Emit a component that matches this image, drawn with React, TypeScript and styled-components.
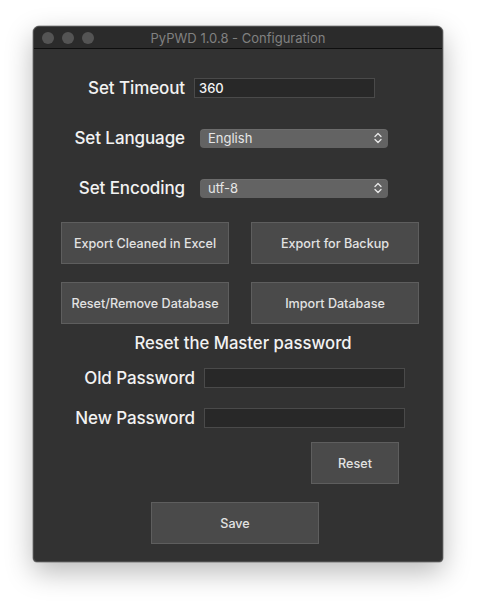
import React from "react";
import styled, { createGlobalStyle } from "styled-components";

const Global = createGlobalStyle`
  html, body { margin: 0; padding: 0; background: #ffffff; }
  body { font-family: Inter, "Noto Sans", "DejaVu Sans", sans-serif; }
`;

const Page = styled.div`
  width: 477px;
  height: 603px;
  padding: 26px 0 0 33px;
  box-sizing: border-box;
  background: #ffffff;
`;

const Window = styled.div`
  width: 410px;
  height: 536px;
  box-sizing: border-box;
  background: #323232;
  border: 1px solid #4c4c4c;
  border-radius: 6px 6px 4px 4px;
  box-shadow: 0 10px 28px rgba(0, 0, 0, 0.28), 0 0 0 0.5px rgba(0, 0, 0, 0.4);
  display: flex;
  flex-direction: column;
  overflow: hidden;
`;

const TitleBar = styled.div`
  height: 21px;
  flex: none;
  background: #2b2b2b;
  border-bottom: 1px solid #0e0e0e;
  display: flex;
  align-items: center;
  position: relative;
  padding-left: 8px;
  gap: 8px;
`;

const Light = styled.span`
  width: 12px;
  height: 12px;
  border-radius: 50%;
  background: #545454;
`;

const Title = styled.div`
  position: absolute;
  left: 0;
  right: 0;
  top: 0;
  bottom: 0;
  display: flex;
  align-items: center;
  justify-content: center;
  font-size: 13px;
  color: #818181;
  pointer-events: none;
`;

const Content = styled.div`
  display: flex;
  flex-direction: column;
  color: #f2f2f2;
`;

const FormRow = styled.div<{ $top: number; $labelW: number; $gap: number; $fieldW: number }>`
  display: grid;
  grid-template-columns: ${(p) => p.$labelW}px ${(p) => p.$fieldW}px;
  column-gap: ${(p) => p.$gap}px;
  align-items: center;
  height: 20px;
  margin-top: ${(p) => p.$top}px;
`;

const Label = styled.div`
  text-align: right;
  font-size: 17px;
  font-weight: 500;
  color: #f2f2f2;
  white-space: nowrap;
  letter-spacing: -0.1px;
`;

const TextField = styled.div`
  height: 20px;
  box-sizing: border-box;
  background: #282828;
  border: 1px solid #4a4a4a;
  font-size: 13px;
  font-weight: 500;
  color: #f4f4f4;
  padding-left: 4px;
  display: flex;
  align-items: center;
`;

const Select = styled.div`
  height: 19px;
  box-sizing: border-box;
  background: #636363;
  border-radius: 4px;
  font-size: 13px;
  color: #e6e6e6;
  padding: 0 6px 0 8px;
  display: flex;
  align-items: center;
  justify-content: space-between;
  box-shadow: inset 0 1px 0 rgba(255, 255, 255, 0.06);
`;

const ButtonGrid = styled.div`
  display: grid;
  grid-template-columns: 168px 168px;
  grid-auto-rows: 42px;
  column-gap: 22px;
  row-gap: 18px;
  margin: 24px 0 0 27px;
`;

const Button = styled.div<{ $w?: number; $left?: number; $top?: number }>`
  box-sizing: border-box;
  height: 42px;
  ${(p) => (p.$w ? `width: ${p.$w}px;` : "")}
  ${(p) => (p.$left !== undefined ? `margin-left: ${p.$left}px;` : "")}
  ${(p) => (p.$top !== undefined ? `margin-top: ${p.$top}px;` : "")}
  background: #4a4a4a;
  border: 1px solid #5e5e5e;
  color: #e2e2e2;
  font-size: 12.6px;
  font-weight: 500;
  display: flex;
  align-items: center;
  justify-content: center;
  white-space: nowrap;
`;

const Heading = styled.div`
  margin-top: 9px;
  height: 20px;
  display: flex;
  align-items: center;
  justify-content: center;
  padding-left: 10px;
  font-size: 16.7px;
  font-weight: 500;
  color: #f2f2f2;
`;

const Chevrons = () => (
  <svg width="8" height="12" viewBox="0 0 8 12" fill="none">
    <path d="M1 4.5 L4 1.5 L7 4.5" stroke="#e8e8e8" strokeWidth="1.3" strokeLinecap="round" strokeLinejoin="round" />
    <path d="M1 7.5 L4 10.5 L7 7.5" stroke="#e8e8e8" strokeWidth="1.3" strokeLinecap="round" strokeLinejoin="round" />
  </svg>
);

export default function App() {
  return (
    <Page>
      <Global />
      <Window>
        <TitleBar>
          <Light />
          <Light />
          <Light />
          <Title>PyPWD 1.0.8 - Configuration</Title>
        </TitleBar>
        <Content>
          <FormRow $top={29} $labelW={151} $gap={9} $fieldW={181}>
            <Label>Set Timeout</Label>
            <TextField>360</TextField>
          </FormRow>
          <FormRow $top={30} $labelW={151} $gap={15} $fieldW={188}>
            <Label>Set Language</Label>
            <Select>
              <span>English</span>
              <Chevrons />
            </Select>
          </FormRow>
          <FormRow $top={30} $labelW={151} $gap={15} $fieldW={188}>
            <Label>Set Encoding</Label>
            <Select>
              <span>utf-8</span>
              <Chevrons />
            </Select>
          </FormRow>
          <ButtonGrid>
            <Button>Export Cleaned in Excel</Button>
            <Button>Export for Backup</Button>
            <Button>Reset/Remove Database</Button>
            <Button>Import Database</Button>
          </ButtonGrid>
          <Heading>Reset the Master password</Heading>
          <FormRow $top={15} $labelW={161} $gap={9} $fieldW={201}>
            <Label>Old Password</Label>
            <TextField />
          </FormRow>
          <FormRow $top={20} $labelW={161} $gap={9} $fieldW={201}>
            <Label>New Password</Label>
            <TextField />
          </FormRow>
          <Button $w={88} $left={277} $top={14}>Reset</Button>
          <Button $w={168} $left={117} $top={18}>Save</Button>
        </Content>
      </Window>
    </Page>
  );
}
